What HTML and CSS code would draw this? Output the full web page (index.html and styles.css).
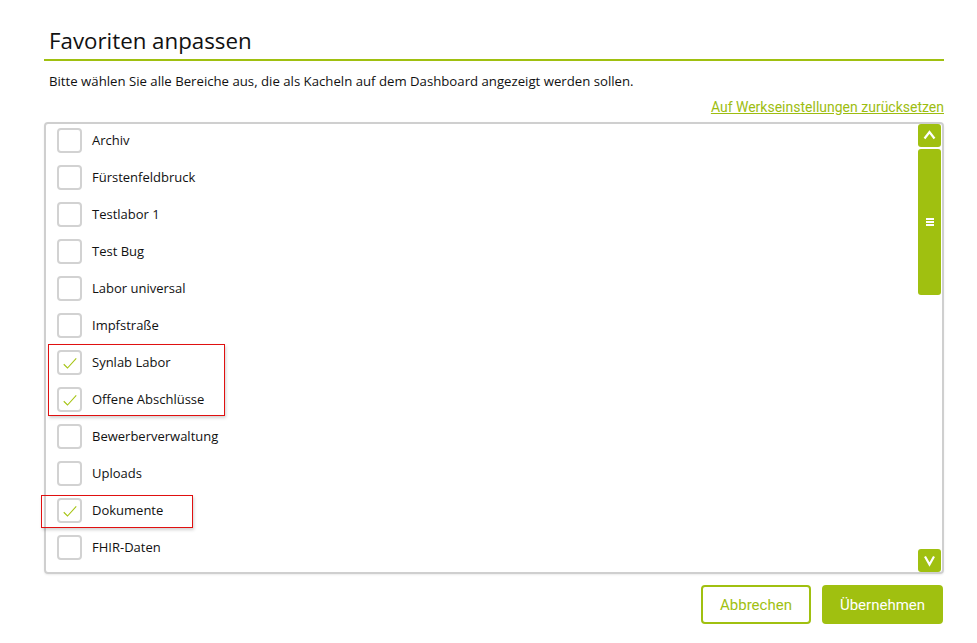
FILE: index.html
```html
<!DOCTYPE html>
<html lang="de">
<head>
<meta charset="utf-8">
<link rel="stylesheet" href="styles.css">
</head>
<body>
<div class="page">
  <h1 class="title">Favoriten anpassen</h1>
  <p class="desc">Bitte wählen Sie alle Bereiche aus, die als Kacheln auf dem Dashboard angezeigt werden sollen.</p>
  <div class="linkrow"><a class="reset" href="#">Auf Werkseinstellungen zurücksetzen</a></div>
  <div class="listbox">
    <ul class="list">
      <li class="row"><span class="cb"></span><span class="lbl">Archiv</span></li>
      <li class="row"><span class="cb"></span><span class="lbl">Fürstenfeldbruck</span></li>
      <li class="row"><span class="cb"></span><span class="lbl">Testlabor 1</span></li>
      <li class="row"><span class="cb"></span><span class="lbl">Test Bug</span></li>
      <li class="row"><span class="cb"></span><span class="lbl">Labor universal</span></li>
      <li class="row"><span class="cb"></span><span class="lbl">Impfstraße</span></li>
      <li class="row"><span class="cb checked"><svg viewBox="0 0 24 24" width="20" height="20"><path d="M4.5 13.5 L9 18 L19.5 6.5" fill="none" stroke="#a6c414" stroke-width="1.3"/></svg></span><span class="lbl">Synlab Labor</span></li>
      <li class="row"><span class="cb checked"><svg viewBox="0 0 24 24" width="20" height="20"><path d="M4.5 13.5 L9 18 L19.5 6.5" fill="none" stroke="#a6c414" stroke-width="1.3"/></svg></span><span class="lbl">Offene Abschlüsse</span></li>
      <li class="row"><span class="cb"></span><span class="lbl">Bewerberverwaltung</span></li>
      <li class="row"><span class="cb"></span><span class="lbl">Uploads</span></li>
      <li class="row"><span class="cb checked"><svg viewBox="0 0 24 24" width="20" height="20"><path d="M4.5 13.5 L9 18 L19.5 6.5" fill="none" stroke="#a6c414" stroke-width="1.3"/></svg></span><span class="lbl">Dokumente</span></li>
      <li class="row"><span class="cb"></span><span class="lbl">FHIR-Daten</span></li>
    </ul>
    <div class="scrollbar">
      <div class="sbtn"><svg viewBox="0 0 23 23" width="23" height="23"><path d="M6.5 14.5 L11.5 8 L16.5 14.5" fill="none" stroke="#fff" stroke-width="2.2"/></svg></div>
      <div class="thumb"><span class="grip"></span></div>
      <div class="sfill"></div>
      <div class="sbtn"><svg viewBox="0 0 23 23" width="23" height="23"><path d="M7 7.5 L11.5 15.5 L16 7.5" fill="none" stroke="#fff" stroke-width="2.2"/></svg></div>
    </div>
    <div class="mark mark1"></div>
    <div class="mark mark2"></div>
  </div>
  <div class="actions">
    <button class="btn cancel">Abbrechen</button>
    <button class="btn ok">Übernehmen</button>
  </div>
</div>
</body>
</html>
```

FILE: styles.css
```css
* { box-sizing: border-box; }
body {
  margin: 0;
  background: #fff;
  font-family: "Open Sans", "Noto Sans", sans-serif;
  color: #1a1a1a;
}
.page {
  width: 900px;
  margin-left: 44px;
  padding-top: 26px;
}
.title {
  margin: 0;
  padding: 0 0 4px 5px;
  font-size: 22.3px;
  font-weight: 400;
  line-height: 29px;
  color: #111;
  border-bottom: 2px solid #a0c010;
}
.desc {
  margin: 0;
  padding: 10px 0 0 5px;
  font-size: 13.2px;
  line-height: 20px;
  color: #111;
}
.linkrow {
  display: flex;
  justify-content: flex-end;
  padding-top: 8px;
  height: 31px;
}
.reset {
  font-family: Roboto, "Liberation Sans", sans-serif;
  font-size: 14px;
  line-height: 16px;
  color: #9dbd10;
  text-decoration: underline;
}
.listbox {
  position: relative;
  display: flex;
  height: 452px;
  border: 2px solid #cfcfcf;
  border-radius: 4px;
  box-shadow: 0 1px 2px rgba(0,0,0,0.08);
}
.list {
  flex: 1;
  list-style: none;
  margin: 0;
  padding: 0 0 0 11px;
}
.row {
  display: flex;
  align-items: flex-start;
  height: 37px;
}
.cb {
  width: 25px;
  height: 25px;
  margin-top: 4px;
  border: 2px solid #d2d2d2;
  border-radius: 4px;
  display: flex;
  align-items: center;
  justify-content: center;
  flex: none;
}
.cb svg { display: block; margin-top: 1px; }
.lbl {
  margin-left: 10px;
  font-size: 13px;
  line-height: 33px;
  color: #111;
}
.scrollbar {
  width: 23px;
  margin-right: 1px;
  display: flex;
  flex-direction: column;
}
.sbtn {
  height: 23px;
  background: #a0c010;
  border-radius: 3px;
}
.sbtn svg { display: block; }
.thumb {
  margin-top: 2px;
  height: 146px;
  background: #a0c010;
  border-radius: 3px;
  display: flex;
  align-items: center;
  justify-content: center;
}
.grip {
  width: 8px;
  height: 8px;
  border-top: 2px solid #fff;
  border-bottom: 2px solid #fff;
  position: relative;
}
.grip::after {
  content: "";
  position: absolute;
  left: 0;
  right: 0;
  top: 1px;
  height: 2px;
  background: #fff;
}
.sfill { flex: 1; }
.mark {
  position: absolute;
  border: 1px solid #e01010;
  box-shadow: 1px 2px 3px rgba(0,0,0,0.18);
  pointer-events: none;
}
.mark1 { left: 2px; top: 220px; width: 177px; height: 72px; }
.mark2 { left: -5px; top: 371px; width: 152px; height: 33px; }
.actions {
  display: flex;
  justify-content: flex-end;
  gap: 11px;
  padding-top: 11px;
  padding-right: 1px;
}
.btn {
  height: 39px;
  border-radius: 4px;
  font-family: Roboto, "Liberation Sans", sans-serif;
  font-size: 15px;
  padding: 0;
  cursor: pointer;
}
.cancel {
  width: 110px;
  background: #fff;
  border: 2px solid #a0c010;
  color: #a0c010;
}
.ok {
  width: 121px;
  background: #a0c010;
  border: 2px solid #a0c010;
  color: #fff;
}
```
